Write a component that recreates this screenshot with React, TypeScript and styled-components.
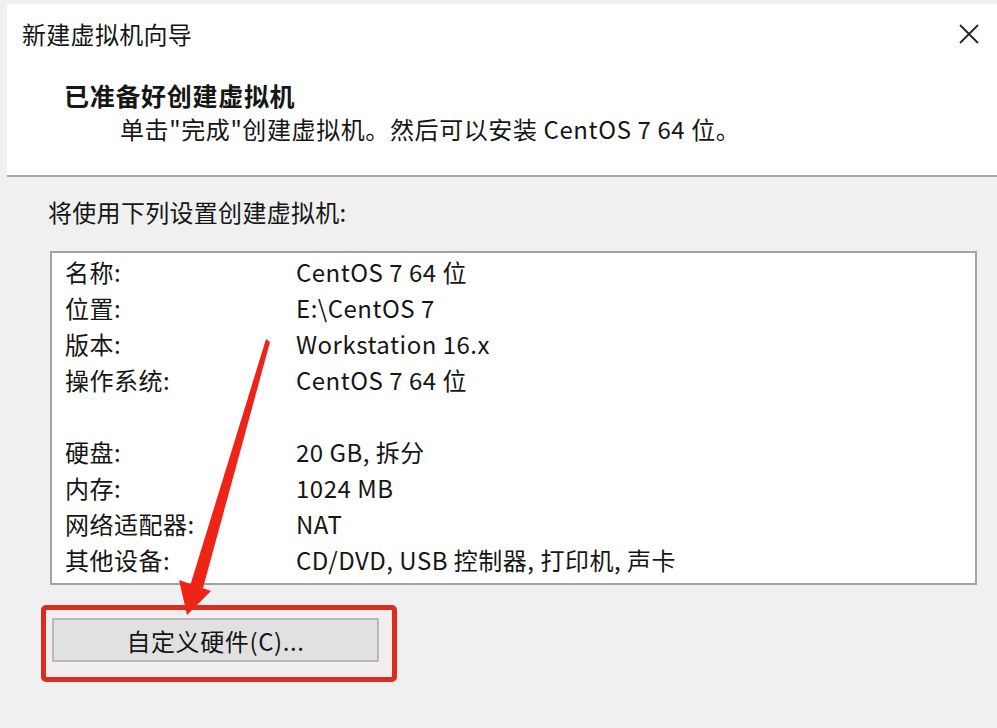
import styled, { createGlobalStyle } from "styled-components";

const GlobalStyle = createGlobalStyle`
  html, body {
    margin: 0;
    padding: 0;
    background: #f0f0f0;
  }
  body {
    font-family: "Noto Sans CJK SC", "Noto Sans", sans-serif;
    color: #161616;
  }
`;

const Window = styled.div`
  position: relative;
  width: 997px;
  height: 728px;
  padding-top: 4px;
  box-sizing: border-box;
  overflow: hidden;
`;

const Header = styled.div`
  margin-left: 7px;
  height: 171px;
  background: #ffffff;
  border-bottom: 2px solid #a9a9a9;
  display: flex;
  flex-direction: column;
`;

const TitleBar = styled.div`
  display: flex;
  align-items: center;
  justify-content: space-between;
  height: 32px;
  margin-top: 14px;
  padding: 0 16px 0 15px;
`;

const Title = styled.div`
  font-size: 24px;
  line-height: 32px;
  letter-spacing: 0.3px;
`;

const CloseButton = styled.div`
  width: 24px;
  height: 24px;
  display: flex;
  align-items: center;
  justify-content: center;
`;

const Heading = styled.div`
  margin: 30px 0 0 57px;
  font-size: 25px;
  font-weight: 700;
  line-height: 30px;
  letter-spacing: 0.7px;
`;

const Subtitle = styled.div`
  margin: 4px 0 0 113px;
  font-size: 24px;
  line-height: 30px;
  letter-spacing: 0.6px;
`;

const Body = styled.div`
  padding: 20px 0 0 48px;
`;

const Intro = styled.div`
  font-size: 24px;
  line-height: 30px;
  letter-spacing: 0.3px;
`;

const SummaryBox = styled.div`
  margin: 24px 0 0 2px;
  width: 927px;
  height: 334px;
  box-sizing: border-box;
  background: #ffffff;
  border: 2px solid #a3a3a3;
  padding: 1px 0 0 13px;
`;

const Row = styled.div`
  display: grid;
  grid-template-columns: 231px 1fr;
  height: 36px;
  align-items: center;
  font-size: 24px;
  line-height: 36px;
  letter-spacing: 0.5px;
  white-space: nowrap;
`;

const Highlight = styled.div`
  display: inline-flex;
  margin: 20px 0 0 -7px;
  padding: 8px 13px 15px 6px;
  border: 5px solid #de2a20;
  border-radius: 5px;
  background: #f3eeee;
`;

const HardwareButton = styled.button`
  width: 327px;
  height: 44px;
  background: #e1e1e1;
  border: 2px solid #b9b9b9;
  font-family: inherit;
  font-size: 24px;
  letter-spacing: 0.6px;
  color: #161616;
  padding: 0;
  display: flex;
  align-items: center;
  justify-content: center;
`;

const Arrow = styled.svg`
  position: absolute;
  left: 0;
  top: 0;
  pointer-events: none;
`;

const rows: [string, string][] = [
  ["名称:", "CentOS 7 64 位"],
  ["位置:", "E:\\CentOS 7"],
  ["版本:", "Workstation 16.x"],
  ["操作系统:", "CentOS 7 64 位"],
  ["", ""],
  ["硬盘:", "20 GB, 拆分"],
  ["内存:", "1024 MB"],
  ["网络适配器:", "NAT"],
  ["其他设备:", "CD/DVD, USB 控制器, 打印机, 声卡"],
];

export default function App() {
  return (
    <>
      <GlobalStyle />
      <Window>
        <Header>
          <TitleBar>
            <Title>新建虚拟机向导</Title>
            <CloseButton>
              <svg width="22" height="22" viewBox="0 0 22 22">
                <path
                  d="M2 2 L20 20 M20 2 L2 20"
                  stroke="#222"
                  strokeWidth="1.8"
                  fill="none"
                />
              </svg>
            </CloseButton>
          </TitleBar>
          <Heading>已准备好创建虚拟机</Heading>
          <Subtitle>单击"完成"创建虚拟机。然后可以安装 CentOS 7 64 位。</Subtitle>
        </Header>
        <Body>
          <Intro>将使用下列设置创建虚拟机:</Intro>
          <SummaryBox>
            {rows.map(([label, value], i) => (
              <Row key={i}>
                <span>{label}</span>
                <span>{value}</span>
              </Row>
            ))}
          </SummaryBox>
          <Highlight>
            <HardwareButton>自定义硬件(C)...</HardwareButton>
          </Highlight>
        </Body>
        <Arrow width="997" height="728" viewBox="0 0 997 728">
          <polygon points="266,339 270,342 203,588 190,586" fill="#ee2419" />
          <polygon points="179,580 211,591 187,615" fill="#ee2419" />
        </Arrow>
      </Window>
    </>
  );
}
